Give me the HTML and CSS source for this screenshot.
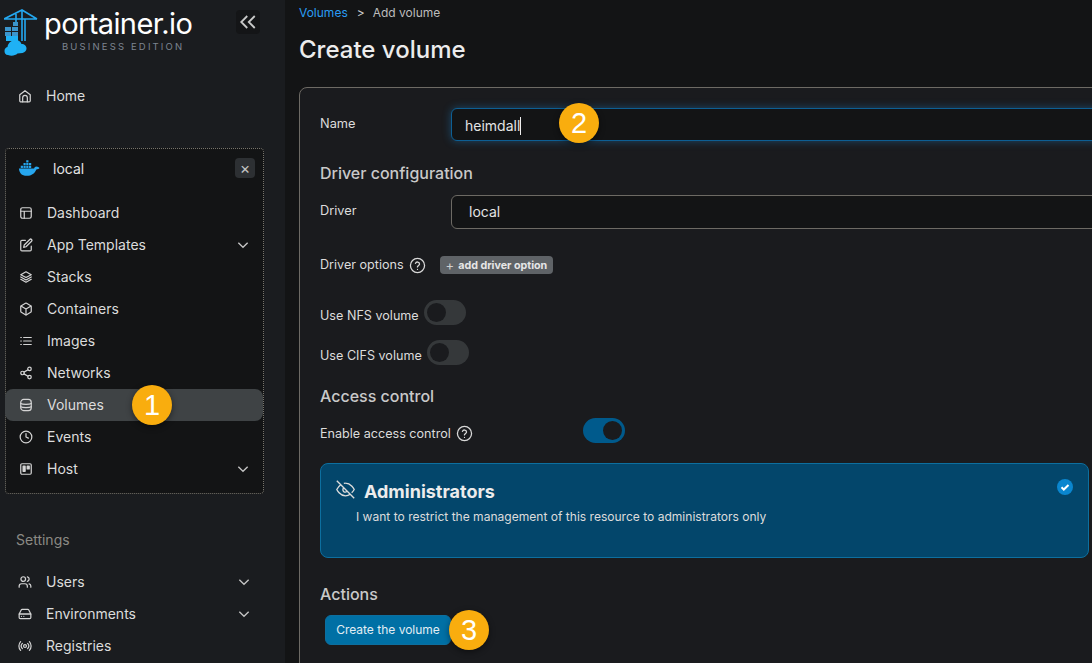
FILE: index.html
```html
<!DOCTYPE html>
<html lang="en">
<head>
  <meta charset="UTF-8">
  <title>Create volume</title>
  <link rel="stylesheet" href="styles.css">
</head>
<body>

  <svg class="sprite" xmlns="http://www.w3.org/2000/svg">
    <symbol id="i-home" viewBox="0 0 24 24"><path d="M3 10l9-7 9 7v10a2 2 0 0 1-2 2H5a2 2 0 0 1-2-2z"/><path d="M8 22v-7a4 4 0 0 1 8 0v7"/></symbol>
    <symbol id="i-layout" viewBox="0 0 24 24"><rect x="3" y="3" width="18" height="18" rx="3"/><path d="M3 9h18M9 9v12"/></symbol>
    <symbol id="i-edit" viewBox="0 0 24 24"><path d="M11 4H5a2 2 0 0 0-2 2v14a2 2 0 0 0 2 2h14a2 2 0 0 0 2-2v-6"/><path d="M18.5 2.5a2.12 2.12 0 0 1 3 3L12 15l-4 1 1-4z"/></symbol>
    <symbol id="i-layers" viewBox="0 0 24 24"><path d="M12 3L3 8l9 5 9-5z"/><path d="M3 12l9 5 9-5"/><path d="M3 16l9 5 9-5"/></symbol>
    <symbol id="i-box" viewBox="0 0 24 24"><path d="M21 16V8a2 2 0 0 0-1-1.7l-7-4a2 2 0 0 0-2 0l-7 4A2 2 0 0 0 3 8v8a2 2 0 0 0 1 1.7l7 4a2 2 0 0 0 2 0l7-4a2 2 0 0 0 1-1.7z"/><path d="M3.3 7L12 12l8.7-5M12 22V12"/></symbol>
    <symbol id="i-list" viewBox="0 0 24 24"><path d="M8 6h13M8 12h13M8 18h13M3 6h1M3 12h1M3 18h1"/></symbol>
    <symbol id="i-share" viewBox="0 0 24 24"><circle cx="18" cy="5" r="3"/><circle cx="6" cy="12" r="3"/><circle cx="18" cy="19" r="3"/><path d="M8.6 13.5l6.8 4M15.4 6.5l-6.8 4"/></symbol>
    <symbol id="i-database" viewBox="0 0 24 24"><rect x="3" y="2.500" width="18" height="19" rx="5"/><path d="M3 9.500c3 2 15 2 18 0M3 15c3 2 15 2 18 0"/></symbol>
    <symbol id="i-clock" viewBox="0 0 24 24"><circle cx="12" cy="12" r="10"/><path d="M12 6v6l4 2"/></symbol>
    <symbol id="i-board" viewBox="0 0 24 24"><rect x="3" y="3" width="18" height="18" rx="2"/><rect x="7" y="7" width="3.500" height="9" fill="currentColor"/><rect x="14" y="7" width="3.500" height="5" fill="currentColor"/></symbol>
    <symbol id="i-users" viewBox="0 0 24 24"><path d="M16 21v-2a4 4 0 0 0-4-4H6a4 4 0 0 0-4 4v2"/><circle cx="9" cy="7" r="4"/><path d="M22 21v-2a4 4 0 0 0-3-3.900M16 3.100a4 4 0 0 1 0 7.800"/></symbol>
    <symbol id="i-drive" viewBox="0 0 24 24"><path d="M22 12H2v6a2 2 0 0 0 2 2h16a2 2 0 0 0 2-2z"/><path d="M5.500 5.100L2 12h20l-3.500-6.900A2 2 0 0 0 16.800 4H7.200a2 2 0 0 0-1.700 1.100z"/><path d="M6 16h.01M10 16h.01"/></symbol>
    <symbol id="i-radio" viewBox="0 0 24 24"><circle cx="12" cy="12" r="2.500"/><path d="M16.500 7.500a6.500 6.500 0 0 1 0 9M7.500 16.500a6.500 6.500 0 0 1 0-9M19.500 4.500a11 11 0 0 1 0 15M4.500 19.500a11 11 0 0 1 0-15"/></symbol>
    <symbol id="i-chevron" viewBox="0 0 24 24"><path d="M5 8.500l7 7 7-7"/></symbol>
    <symbol id="i-help" viewBox="0 0 24 24"><circle cx="12" cy="12" r="10"/><path d="M9.100 9a3 3 0 0 1 5.800 1c0 2-3 2.600-3 4M12 17.500h.01"/></symbol>
  </svg>

  <div class="app">
    <aside class="sidebar">
      <div class="brand">
        <svg class="brand-mark" viewBox="0 0 38 56" xmlns="http://www.w3.org/2000/svg">
          <path class="crane" d="M0 10L18 1l15 9M0 10h33M18 1v31M21 10v22M12 5v8"/>
          <rect class="crate" x="9" y="13" width="5" height="4"/>
          <rect class="crate" x="1" y="18" width="6" height="4"/>
          <rect class="crate" x="8" y="18" width="6" height="4"/>
          <rect class="crate" x="1" y="23" width="6" height="4"/>
          <rect class="crate" x="8" y="23" width="6" height="4"/>
          <path class="cloud" d="M2 27h12v5H2z"/>
          <path class="cloud" d="M4 46c-2.500 0-3.500-2-3.500-4 0-2 1-3.500 3-4 .5-4 4-7 8-7 3 0 5 1.500 6 4 3 0 5 2 5 4.500 0 2-1.500 4-4 4.500l-5 .5c-2 2-6 3-9.500 1.500z"/>
        </svg>
        <div class="brand-text">
          <div class="brand-name">portainer.io</div>
          <div class="brand-edition">BUSINESS EDITION</div>
        </div>
        <button class="collapse" type="button">
          <svg class="collapse-icon" viewBox="0 0 24 24"><path d="M11 4l-8 8 8 8M21 4l-8 8 8 8"/></svg>
        </button>
      </div>

      <a class="nav-row nav-top"><svg class="ico"><use href="#i-home"/></svg>Home</a>

      <div class="env">
        <div class="env-head">
          <svg class="whale" viewBox="0 0 24 18" xmlns="http://www.w3.org/2000/svg">
            <path d="M1 9h16.500c.5-1.500 2-2.500 3-2 .5-.2 2 .3 3 1.500-1 1.200-2 1.500-3.500 1.500-1.500 4-5 7-10.500 7C4 17 1.500 14 1 9z"/>
            <rect x="3" y="6" width="2.400" height="2.400"/><rect x="6" y="6" width="2.400" height="2.400"/><rect x="9" y="6" width="2.400" height="2.400"/><rect x="12" y="6" width="2.400" height="2.400"/>
            <rect x="6" y="3" width="2.400" height="2.400"/><rect x="9" y="3" width="2.400" height="2.400"/><rect x="12" y="3" width="2.400" height="2.400"/><rect x="9" y="0" width="2.400" height="2.400"/>
          </svg>
          <span class="env-name">local</span>
          <span class="env-close">&times;</span>
        </div>
        <a class="nav-row"><svg class="ico"><use href="#i-layout"/></svg>Dashboard</a>
        <a class="nav-row"><svg class="ico"><use href="#i-edit"/></svg>App Templates<svg class="chev"><use href="#i-chevron"/></svg></a>
        <a class="nav-row"><svg class="ico"><use href="#i-layers"/></svg>Stacks</a>
        <a class="nav-row"><svg class="ico"><use href="#i-box"/></svg>Containers</a>
        <a class="nav-row"><svg class="ico"><use href="#i-list"/></svg>Images</a>
        <a class="nav-row"><svg class="ico"><use href="#i-share"/></svg>Networks</a>
        <a class="nav-row active"><svg class="ico"><use href="#i-database"/></svg>Volumes<span class="step step-1">1</span></a>
        <a class="nav-row"><svg class="ico"><use href="#i-clock"/></svg>Events</a>
        <a class="nav-row"><svg class="ico"><use href="#i-board"/></svg>Host<svg class="chev"><use href="#i-chevron"/></svg></a>
      </div>

      <div class="nav-title">Settings</div>
      <a class="nav-row nav-top"><svg class="ico"><use href="#i-users"/></svg>Users<svg class="chev"><use href="#i-chevron"/></svg></a>
      <a class="nav-row nav-top"><svg class="ico"><use href="#i-drive"/></svg>Environments<svg class="chev"><use href="#i-chevron"/></svg></a>
      <a class="nav-row nav-top"><svg class="ico"><use href="#i-radio"/></svg>Registries</a>
    </aside>

    <main class="content">
      <div class="crumbs"><a class="crumb-link">Volumes</a><span class="crumb-sep">&gt;</span><span>Add volume</span></div>
      <h1 class="page-title">Create volume</h1>

      <form class="card">
        <div class="row row-name">
          <label class="label">Name</label>
          <div class="input focused">heimdall<span class="caret"></span><span class="step step-2">2</span></div>
        </div>

        <h2 class="section section-driver">Driver configuration</h2>
        <div class="row row-driver">
          <label class="label">Driver</label>
          <div class="input plain">local</div>
        </div>
        <div class="inline row-options">
          <span class="options-text">Driver options</span>
          <svg class="help"><use href="#i-help"/></svg>
          <button class="add-option" type="button"><span class="plus">+</span>add driver option</button>
        </div>

        <div class="inline row-nfs">
          <span class="toggle-text">Use NFS volume</span>
          <span class="toggle"></span>
        </div>
        <div class="inline row-cifs">
          <span class="toggle-text">Use CIFS volume</span>
          <span class="toggle"></span>
        </div>

        <h2 class="section section-access">Access control</h2>
        <div class="inline row-enable">
          <span class="enable-label toggle-text">Enable access control<svg class="help"><use href="#i-help"/></svg></span>
          <span class="toggle on"></span>
        </div>

        <div class="access-box">
          <svg class="eye-off" viewBox="0 0 24 24"><path d="M9.900 4.200A9 9 0 0 1 12 4c7 0 11 8 11 8a18 18 0 0 1-3.200 4.200M14.100 14.100a3 3 0 1 1-4.200-4.200M17.900 17.900A10 10 0 0 1 12 20C5 20 1 12 1 12a18 18 0 0 1 5-5.900M1 1l22 22"/></svg>
          <svg class="check" viewBox="0 0 16 16"><circle cx="8" cy="8" r="8"/><path d="M4.500 8.300l2.300 2.200 4.700-4.500"/></svg>
          <div class="access-title">Administrators</div>
          <div class="access-text">I want to restrict the management of this resource to administrators only</div>
        </div>

        <h2 class="section section-actions">Actions</h2>
        <div class="actions">
          <button class="create" type="button">Create the volume</button>
          <span class="step step-3">3</span>
        </div>
      </form>
    </main>
  </div>

</body>
</html>
```

FILE: styles.css
```css
* {
  box-sizing: border-box;
}

html, body {
  height: 100%;
  margin: 0;
  overflow: hidden;
}

body {
  font-family: Inter, "Liberation Sans", sans-serif;
  font-size: 14px;
  color: #e4e4e4;
  background: #131415;
}

.sprite {
  display: none;
}

.app {
  display: flex;
  height: 100%;
  overflow: hidden;
}

/* sidebar */
.sidebar {
  width: 285px;
  flex: none;
  padding-left: 5px;
  background: #1a1c1f;
}

.brand {
  display: flex;
  height: 80px;
  position: relative;
}

.brand-mark {
  width: 38px;
  height: 56px;
  flex: none;
  margin-top: 9px;
  margin-left: -1px;
}

.crane {
  fill: none;
  stroke: #24a8f0;
  stroke-width: 1.600;
}

.crate {
  fill: #3b95cc;
}

.cloud {
  fill: #1fb1f5;
}

.brand-text {
  margin-left: 2px;
  padding-top: 8px;
}

.brand-name {
  font-size: 29px;
  letter-spacing: -.6px;
  line-height: 32px;
  color: #fff;
}

.brand-edition {
  margin-top: 1px;
  margin-left: 18px;
  font-size: 9.500px;
  line-height: 11px;
  letter-spacing: 2.150px;
  color: #7d8591;
  white-space: nowrap;
}

.collapse {
  position: absolute;
  left: 231px;
  top: 10px;
  width: 24px;
  height: 24px;
  padding: 3px;
  border: 0;
  border-radius: 4px;
  background: #141517;
}

.collapse-icon {
  display: block;
  width: 18px;
  height: 18px;
  fill: none;
  stroke: #c8c8c8;
  stroke-width: 2.400;
}

.nav-row {
  display: flex;
  align-items: center;
  height: 32px;
  width: 259px;
  padding: 0 12px 2px 14px;
  border-radius: 8px;
  color: #dcdcdc;
  position: relative;
}

.nav-top {
  width: 259px;
  padding-left: 13px;
}

.ico {
  width: 14px;
  height: 14px;
  margin-top: 2px;
  margin-right: 14px;
  flex: none;
  fill: none;
  stroke: #d4d4d4;
  stroke-width: 2.100;
  stroke-linecap: round;
  stroke-linejoin: round;
}

.chev {
  width: 16px;
  height: 16px;
  margin-top: 2px;
  margin-left: auto;
  fill: none;
  stroke: #c4c4c4;
  stroke-width: 2;
}

.env {
  width: 259px;
  height: 346px;
  margin-top: 36px;
  margin-bottom: 35px;
  border: 1px dotted #77746c;
  border-radius: 4px;
  background: #131415;
}

.env .nav-row {
  width: 258px;
  margin-left: -1px;
}

.env-head {
  display: flex;
  align-items: center;
  height: 48px;
  padding: 0 8px 10px 12px;
}

.whale {
  width: 22px;
  height: 17px;
  fill: #26a6ee;
}

.env-name {
  margin-left: 13px;
}

.env-close {
  width: 20px;
  height: 20px;
  margin-left: auto;
  border-radius: 4px;
  background: #2d3033;
  color: #c4c4c4;
  font-size: 16px;
  line-height: 20px;
  text-align: center;
}

.active {
  background: #3f4345;
}

.nav-title {
  height: 22px;
  margin-left: 11px;
  margin-bottom: 15px;
  color: #8b8a84;
  line-height: 22px;
}

/* main content */
.content {
  flex: none;
  width: 860px;
  height: 100%;
  overflow: hidden;
  padding: 5px 0 0 14px;
}

.crumbs {
  display: flex;
  height: 16px;
  font-size: 12px;
  line-height: 16px;
  color: #bdbdbd;
}

.crumb-link {
  color: #2a9df4;
}

.crumb-sep {
  margin: 0 8px 0 9px;
  color: #cfcfcf;
}

.page-title {
  margin: 14px 0 0;
  font-size: 24px;
  font-weight: 500;
  line-height: 30px;
  color: #ececec;
}

.card {
  width: 840px;
  height: 640px;
  margin-top: 22px;
  padding: 0 20px;
  border: 1px solid #6d6a64;
  border-radius: 8px;
  background: #1a1b1e;
}

.row {
  display: flex;
  align-items: center;
}

.label {
  width: 131px;
  flex: none;
  font-size: 12.800px;
  color: #dcdcdc;
}

.row-name .label {
  padding-bottom: 3px;
}

.row-name {
  margin-top: 20px;
}

.input {
  flex: 1;
  position: relative;
  display: flex;
  align-items: center;
  border-radius: 6px;
  background: #131415;
  color: #e4e4e4;
  font-size: 14px;
}

.focused {
  height: 33px;
  padding-left: 13px;
  padding-top: 2px;
  border: 1px solid #0d5f94;
  box-shadow: 0 0 8px rgba(30, 130, 200, .45);
}

.caret {
  width: 1px;
  height: 18px;
  background: #eee;
}

.plain {
  height: 34px;
  padding-left: 17px;
  padding-bottom: 2px;
  border: 1px solid #6d6a64;
}

.row-driver .label {
  padding-bottom: 3px;
}

.section {
  height: 24px;
  margin: 0;
  font-size: 16px;
  font-weight: 500;
  line-height: 24px;
  color: #c9c9c9;
}

.section-driver {
  margin-top: 20px;
}

.row-driver {
  margin-top: 10px;
}

.inline {
  display: flex;
  align-items: center;
  font-size: 12.600px;
  color: #dcdcdc;
}

.toggle-text {
  padding-top: 6px;
}

.row-options {
  height: 20px;
  margin-top: 26px;
}

.options-text {
  padding-bottom: 1px;
}

.help {
  width: 17px;
  height: 17px;
  margin-left: 5px;
  flex: none;
  fill: none;
  stroke: #d8d8d8;
  stroke-width: 1.800;
  stroke-linecap: round;
}

.add-option {
  display: flex;
  align-items: center;
  height: 18px;
  margin-left: 14px;
  padding: 0 6px;
  border: 0;
  border-radius: 4px;
  background: #5f6367;
  color: #e6e6e6;
  font-family: inherit;
  font-size: 10.700px;
  font-weight: 700;
}

.plus {
  margin-right: 4px;
  font-size: 13px;
  font-weight: 400;
  line-height: 13px;
  color: #cfcfcf;
}

.toggle {
  display: block;
  width: 42px;
  height: 25px;
  position: relative;
  flex: none;
  border-radius: 13px;
  background: #35383a;
}

.toggle::after {
  content: "";
  position: absolute;
  left: 3px;
  top: 3px;
  width: 19px;
  height: 19px;
  border-radius: 50%;
  background: #1a1b1e;
}

.toggle.on {
  background: #005a8c;
}

.toggle.on::after {
  left: 20px;
}

.row-nfs {
  margin-top: 25px;
  gap: 5px;
}

.row-cifs {
  margin-top: 15px;
  gap: 5px;
}

.section-access {
  margin-top: 19px;
}

.row-enable {
  margin-top: 10px;
}

.enable-label {
  display: flex;
  align-items: center;
  width: 263px;
}

.access-box {
  width: 769px;
  height: 95px;
  margin-top: 20px;
  padding: 17px 0 0 35px;
  position: relative;
  border: 1px solid #0d6f9f;
  border-radius: 8px;
  background: #03466b;
}

.eye-off {
  position: absolute;
  left: 15px;
  top: 16px;
  width: 19px;
  height: 19px;
  fill: none;
  stroke: #dcdcdc;
  stroke-width: 1.700;
}

.check {
  position: absolute;
  right: 15px;
  top: 15px;
  width: 16px;
  height: 16px;
  fill: #0a86cf;
  stroke: none;
}

.check path {
  fill: none;
  stroke: #fff;
  stroke-width: 2;
}

.access-title {
  margin-left: 8px;
  font-size: 18px;
  font-weight: 700;
  line-height: 22px;
  color: #ececec;
}

.access-text {
  margin-top: 6px;
  font-size: 12.050px;
  line-height: 16px;
  color: #dcdcdc;
}

.section-actions {
  margin-top: 24px;
}

.actions {
  display: flex;
  position: relative;
  margin-top: 9px;
  margin-left: 5px;
}

.create {
  width: 126px;
  height: 30px;
  padding: 0 0 2px;
  border: 1px solid #0d6f9f;
  border-radius: 6px;
  background: #0070a5;
  color: #e3eef4;
  font-family: inherit;
  font-size: 12px;
}

/* numbered callouts laid over the shot */
.step {
  position: absolute;
  width: 40px;
  height: 40px;
  border-radius: 50%;
  background: #f9ad0e;
  box-shadow: 0 2px 6px rgba(0, 0, 0, .45);
  color: #fff;
  font-family: "Liberation Sans", sans-serif;
  font-size: 29px;
  line-height: 40px;
  text-align: center;
}

.step-1 {
  left: 127px;
  top: -4px;
}

.step-2 {
  left: 107px;
  top: -6px;
}

.step-3 {
  left: 124px;
  top: -5px;
}
```
